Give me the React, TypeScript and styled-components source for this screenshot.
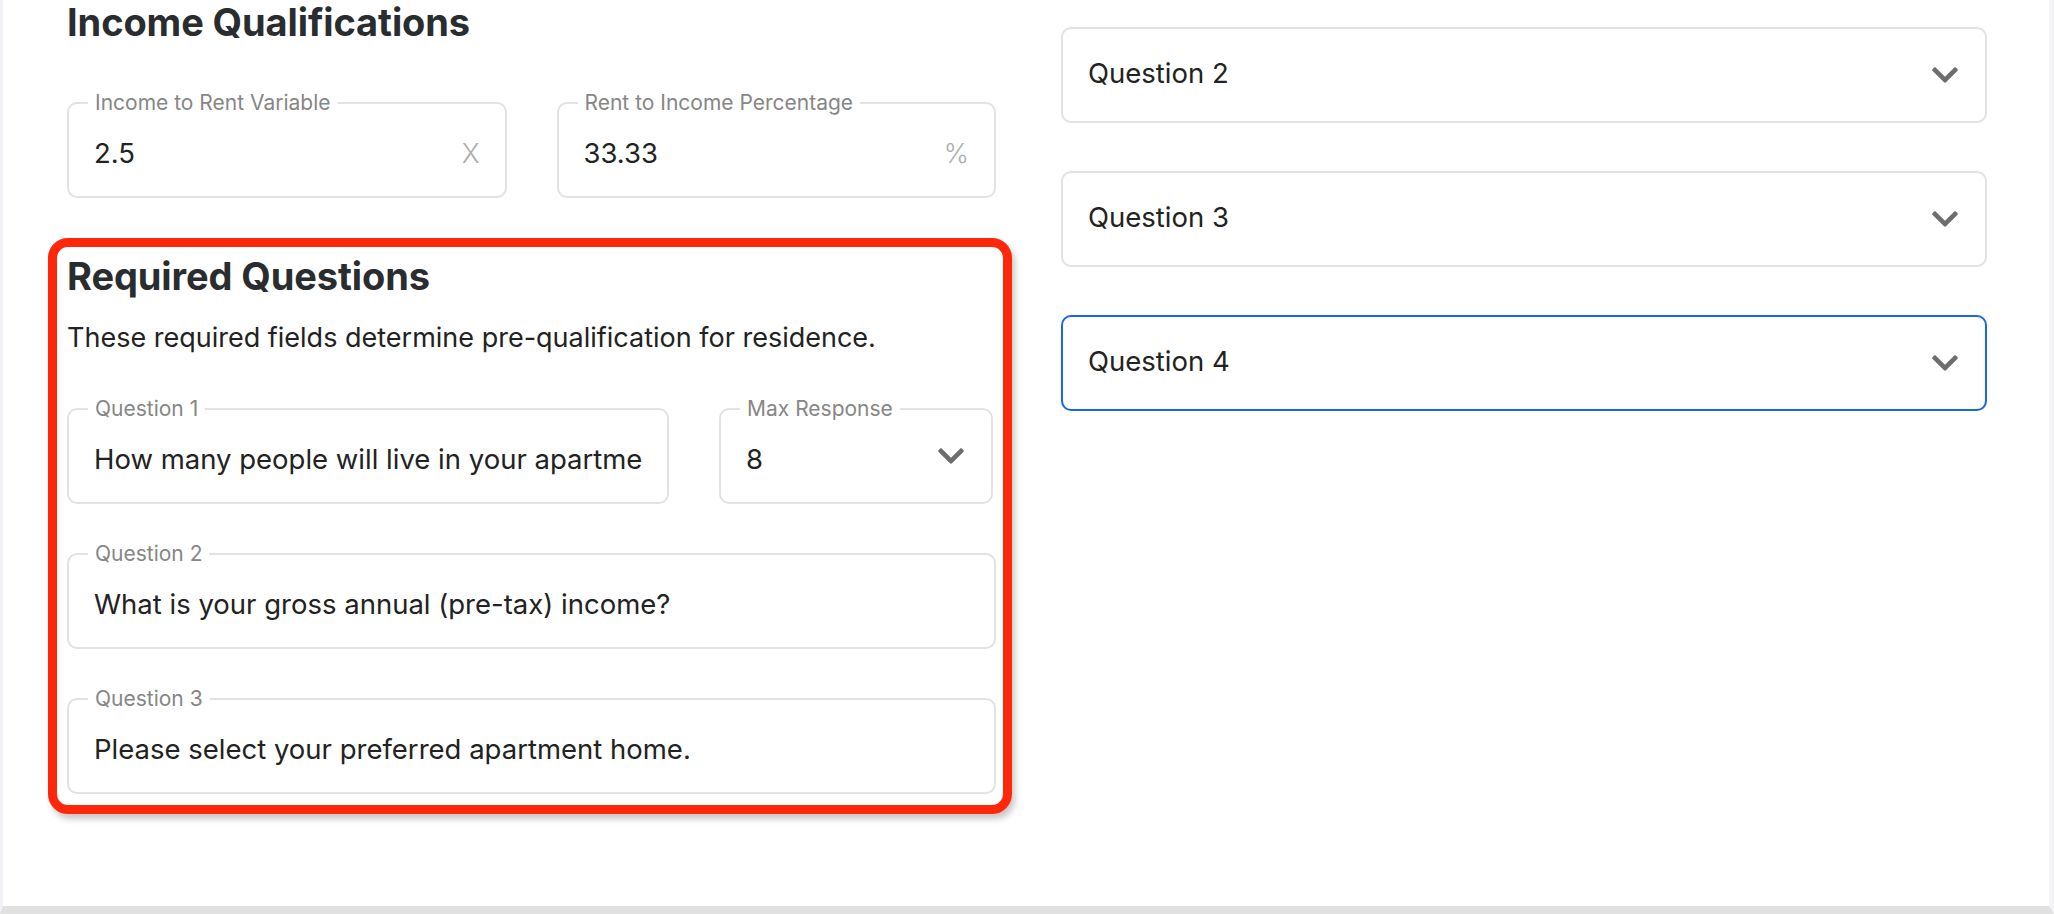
import styled, { createGlobalStyle } from "styled-components";
import { FaChevronDown } from "react-icons/fa";

const GlobalStyle = createGlobalStyle`
  html, body {
    margin: 0;
    padding: 0;
    background: #fff;
  }
  * {
    box-sizing: border-box;
  }
  body {
    font-family: Inter, Lato, "Liberation Sans", sans-serif;
    color: #26292b;
  }
`

const Page = styled.div`
  width: 2054px;
  height: 914px;
  overflow: hidden;
  background: #fff;
  border-left: 3px solid #f2f2f6;
  border-right: 5px solid #f4f4f6;
  border-bottom: 8px solid #e1e1e1;
  padding-left: 64px;
  display: grid;
  grid-template-columns: 929px 926px;
  column-gap: 65px;
  align-items: start;
`

const LeftColumn = styled.div`
  display: flex;
  flex-direction: column;
`

const RightColumn = styled.div`
  display: flex;
  flex-direction: column;
  gap: 48px;
  padding-top: 27px;
`

const Heading = styled.h2`
  margin: 0;
  font-size: 38px;
  font-weight: 700;
  line-height: 44px;
  letter-spacing: -0.1px;
  color: #2a2d2f;
`

const Subtitle = styled.p`
  margin: 24px 0 0;
  font-size: 27px;
  line-height: 32px;
  color: #222;
`

const Row = styled.div<{ $top?: number; $inset?: number }>`
  display: flex;
  gap: 50px;
  margin-top: ${p => p.$top ?? 0}px;
  margin-right: ${p => p.$inset ?? 0}px;
`

const Stack = styled.div`
  display: flex;
  flex-direction: column;
  gap: 49px;
  margin-top: 54px;
`

const Section = styled.section`
  position: relative;
  margin-top: 56px;

  &::after {
    content: "";
    position: absolute;
    top: -16px;
    left: -19px;
    right: -16px;
    bottom: -20px;
    border: 9px solid #ff2709;
    border-radius: 20px;
    box-shadow: 3px 5px 6px rgba(0, 0, 0, 0.22);
    pointer-events: none;
  }
`

const Field = styled.div<{ $focused?: boolean; $width?: number }>`
  position: relative;
  flex: ${p => (p.$width ? `0 0 ${p.$width}px` : "1 1 0")};
  min-width: 0;
  height: 96px;
  min-height: 96px;
  border: 2px solid ${p => (p.$focused ? "#1766ef" : "#e2e2e2")};
  border-radius: 10px;
  background: #fff;
  display: flex;
  align-items: center;
  justify-content: space-between;
  gap: 16px;
  padding: 0 25px;
`

const FieldLabel = styled.span`
  position: absolute;
  top: -12px;
  left: 19px;
  padding: 0 7px;
  background: #fff;
  font-size: 21px;
  line-height: 22px;
  color: #868686;
  white-space: nowrap;
`

const FieldValue = styled.span<{ $shift: number }>`
  margin-top: ${p => p.$shift}px;
  font-size: 27.5px;
  line-height: 32px;
  color: #222;
  white-space: nowrap;
  overflow: hidden;
  min-width: 0;
`

const Suffix = styled.span`
  margin-top: 6px;
  font-size: 27px;
  font-weight: 300;
  color: #adadad;
`

const Chevron = styled(FaChevronDown)`
  flex: 0 0 auto;
  color: #6d6d6d;
  width: 30px;
  height: 30px;
`

type InputProps = {
  label?: string;
  value: string;
  suffix?: string;
  select?: boolean;
  focused?: boolean;
  width?: number;
};

const Input = ({ label, value, suffix, select, focused, width }: InputProps) => (
  <Field $focused={focused} $width={width}>
    {label && <FieldLabel>{label}</FieldLabel>}
    <FieldValue $shift={label ? 6 : -4}>{value}</FieldValue>
    {suffix && <Suffix>{suffix}</Suffix>}
    {select && <Chevron />}
  </Field>
)

const App = () => {
  return (
    <>
      <GlobalStyle />
      <Page>
        <LeftColumn>
          <Heading>Income Qualifications</Heading>
          <Row $top={58}>
            <Input label="Income to Rent Variable" value="2.5" suffix="X" />
            <Input label="Rent to Income Percentage" value="33.33" suffix="%" />
          </Row>

          <Section>
            <Heading>Required Questions</Heading>
            <Subtitle>These required fields determine pre-qualification for residence.</Subtitle>
            <Stack>
              <Row $inset={3}>
                <Input label="Question 1" value="How many people will live in your apartment?" />
                <Input label="Max Response" value="8" select width={274} />
              </Row>
              <Input label="Question 2" value="What is your gross annual (pre-tax) income?" />
              <Input label="Question 3" value="Please select your preferred apartment home." />
            </Stack>
          </Section>
        </LeftColumn>

        <RightColumn>
          <Input value="Question 2" select />
          <Input value="Question 3" select />
          <Input value="Question 4" select focused />
        </RightColumn>
      </Page>
    </>
  )
}

export default App
